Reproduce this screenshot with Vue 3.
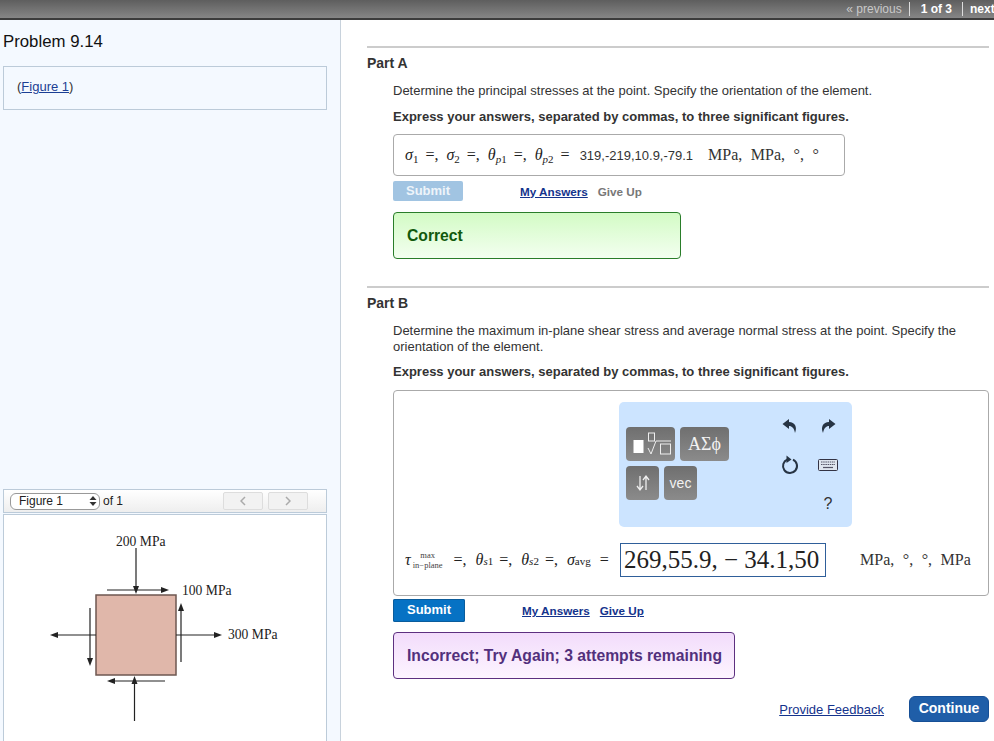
<script setup>
const partAMath = [
  { sym: 'σ', subIt: '', sub: '1' },
  { sym: 'σ', subIt: '', sub: '2' },
  { sym: 'θ', subIt: 'p', sub: '1' },
  { sym: 'θ', subIt: 'p', sub: '2' }
]
const partBMath = [
  { sym: 'θ', subIt: 's', sub: '1' },
  { sym: 'θ', subIt: 's', sub: '2' }
]
</script>

<template>
  <div class="page">
    <header class="topbar">
      <span class="nav-prev">« previous</span>
      <span class="nav-count">1 of 3</span>
      <span class="nav-next">next</span>
    </header>

    <div class="body-row">
      <aside class="sidebar">
        <h1 class="problem-title">Problem 9.14</h1>
        <div class="intro-box">(<a class="link-plain">Figure 1</a>)</div>

        <div class="figure-area">
          <div class="figure-bar">
            <div class="figure-select">
              <span>Figure 1</span>
              <svg width="8" height="12" viewBox="0 0 8 12">
                <path d="M4 1 L7.5 5 H0.5 Z M4 11 L7.5 7 H0.5 Z" fill="#333" />
              </svg>
            </div>
            <span class="figure-of">of 1</span>
            <div class="pager">
              <span class="pager-btn">
                <svg width="6" height="10" viewBox="0 0 6 10"><path d="M5 1 L1 5 L5 9" fill="none" stroke="#aaa" stroke-width="1.5" /></svg>
              </span>
              <span class="pager-btn">
                <svg width="6" height="10" viewBox="0 0 6 10"><path d="M1 1 L5 5 L1 9" fill="none" stroke="#aaa" stroke-width="1.5" /></svg>
              </span>
            </div>
          </div>
          <div class="figure-canvas">
            <svg class="diagram" width="322" height="226" viewBox="4 515 322 226">
              <rect x="96" y="595" width="80" height="80" fill="#e0b7aa" stroke="#6e5750" stroke-width="1.5" />
              <g stroke="#222" stroke-width="1.2" fill="none">
                <path d="M136 548 V590" />
                <path d="M107 590 H165" />
                <path d="M176 635 H218" />
                <path d="M96 635 H56" />
                <path d="M90 608 V660" />
                <path d="M181 606 V662" />
                <path d="M112 681 H165" />
                <path d="M134.500 684 V721" />
              </g>
              <g fill="#222">
                <path d="M136 594 L133 586 H139 Z" />
                <path d="M169 590 L161 587 V593 Z" />
                <path d="M222 635 L214 632 V638 Z" />
                <path d="M50 635 L58 632 V638 Z" />
                <path d="M90 666 L87 658 H93 Z" />
                <path d="M181 603 L178 611 H184 Z" />
                <path d="M107 681 L115 678 V684 Z" />
                <path d="M134.500 676 L131.500 684 H137.500 Z" />
              </g>
              <g class="diagram-label">
                <text x="116" y="546">200 MPa</text>
                <text x="182" y="595">100 MPa</text>
                <text x="228" y="639">300 MPa</text>
              </g>
            </svg>
          </div>
        </div>
      </aside>

      <main class="content">
        <section class="part part-a">
          <h2 class="part-title">Part A</h2>
          <div class="part-body">
            <p class="question">Determine the principal stresses at the point. Specify the orientation of the element.</p>
            <p class="instruction">Express your answers, separated by commas, to three significant figures.</p>
            <div class="answer-box answer-a">
              <span class="math">
                <template v-for="(m, i) in partAMath" :key="i">
                  <i>{{ m.sym }}</i><sub><i>{{ m.subIt }}</i>{{ m.sub }}</sub><span class="eq">=</span><span v-if="i < 3" class="comma">,</span>
                </template>
              </span>
              <span class="answer-value">319,-219,10.9,-79.1</span>
              <span class="units">MPa, MPa, °, °</span>
            </div>
            <div class="actions">
              <button class="submit submit-off">Submit</button>
              <a class="act-link act-a">My Answers</a>
              <span class="give-up-off">Give Up</span>
            </div>
            <div class="feedback correct">Correct</div>
          </div>
        </section>

        <section class="part part-b">
          <h2 class="part-title">Part B</h2>
          <div class="part-body">
            <p class="question">Determine the maximum in-plane shear stress and average normal stress at the point. Specify the orientation of the element.</p>
            <p class="instruction instruction-b">Express your answers, separated by commas, to three significant figures.</p>
            <div class="answer-box answer-b">
              <div class="palette">
                <div class="palette-tools">
                  <div class="tool-row">
                    <span class="tool tool-wide">
                      <svg width="42" height="26" viewBox="0 0 42 26">
                        <rect x="3.500" y="9" width="10" height="13" fill="#fff" />
                        <rect x="18.500" y="2" width="6" height="8" fill="none" stroke="#eee" />
                        <path d="M18 17 L21 23 L26 10 H41" fill="none" stroke="#eee" stroke-width="1" />
                        <rect x="30.500" y="13" width="10" height="10" fill="none" stroke="#eee" />
                      </svg>
                    </span>
                    <span class="tool tool-wide tool-greek">ΑΣϕ</span>
                  </div>
                  <div class="tool-row">
                    <span class="tool tool-narrow">
                      <svg width="18" height="18" viewBox="0 0 18 18">
                        <path d="M6 2 V15 M3 12 L6 16 L9 12 M12 16 V3 M9 6 L12 2 L15 6" fill="none" stroke="#eee" stroke-width="1.300" />
                      </svg>
                    </span>
                    <span class="tool tool-narrow tool-vec">vec</span>
                  </div>
                </div>
                <div class="palette-side">
                  <svg class="side-icon" width="16" height="16" viewBox="0 0 16 16">
                    <path d="M7 1 L0.500 6 L7 11 V8 C10 8 12 10 13 15 C15.500 9 13 4 7 4 Z" fill="#273444" />
                  </svg>
                  <svg class="side-icon" width="16" height="16" viewBox="0 0 16 16">
                    <path d="M9 1 L15.500 6 L9 11 V8 C6 8 4 10 3 15 C0.500 9 3 4 9 4 Z" fill="#273444" />
                  </svg>
                  <svg class="side-icon" width="20" height="20" viewBox="0 0 20 20">
                    <path d="M7.500 4.500 A7 7 0 1 0 13 4.700" fill="none" stroke="#273444" stroke-width="2" />
                    <path d="M6.500 0.500 L11.500 4.500 L6.500 8 Z" fill="#273444" />
                  </svg>
                  <svg class="side-icon" width="20" height="12" viewBox="0 0 20 12">
                    <rect x="0.500" y="0.500" width="19" height="11" rx="1" fill="#dfe6ee" stroke="#334" />
                    <path d="M3 3 H17 M3 5.500 H17" stroke="#556" stroke-width="1.200" stroke-dasharray="1.500 0.700" />
                    <path d="M5 8.500 H15" stroke="#556" stroke-width="1.200" />
                  </svg>
                  <span class="side-blank"></span>
                  <span class="side-help">?</span>
                </div>
              </div>
              <div class="answer-line">
                <span class="math math-b">
                  <span class="tau"><i>τ</i><span class="tau-sub"><span>max</span><span>in−plane</span></span></span>
                  <span class="eq">=</span><span class="comma">,</span>
                  <template v-for="(m, i) in partBMath" :key="i">
                    <i>{{ m.sym }}</i><sub><i>{{ m.subIt }}</i>{{ m.sub }}</sub>
                    <span class="eq">=</span><span class="comma">,</span>
                  </template>
                  <i>σ</i><sub>avg</sub>
                  <span class="eq eq-last">=</span>
                </span>
                <span class="value-input">269,55.9, − 34.1,50</span>
                <span class="units units-b">MPa, °, °, MPa</span>
              </div>
            </div>
            <div class="actions actions-b">
              <button class="submit">Submit</button>
              <a class="act-link act-b">My Answers</a>
              <a class="act-link">Give Up</a>
            </div>
            <div class="feedback incorrect">Incorrect; Try Again; 3 attempts remaining</div>
          </div>
        </section>

        <div class="footer-row">
          <a class="feedback-link">Provide Feedback</a>
          <button class="continue">Continue</button>
        </div>
      </main>
    </div>
  </div>
</template>

<style scoped>
.page {
  width: 994px;
  height: 741px;
  overflow: hidden;
  background: #fff;
  color: #222;
  font-family: "Liberation Sans", Arial, sans-serif;
  font-size: 12px;
}

.topbar {
  height: 18px;
  border-bottom: 2px solid #3c3c3c;
  background: linear-gradient(#5e5e5e, #868686);
  display: flex;
  justify-content: flex-end;
  align-items: center;
  font-size: 12px;
  color: #fff;
}

.nav-prev {
  color: #c9c9c9;
  padding-right: 7px;
  border-right: 1px solid #ddd;
  line-height: 14px;
}

.nav-count {
  font-weight: bold;
  padding: 0 10px 0 11px;
  border-right: 1px solid #ddd;
  line-height: 14px;
}

.nav-next {
  font-weight: bold;
  padding-left: 7px;
  width: 24px;
  overflow: hidden;
  white-space: nowrap;
  line-height: 14px;
}

.body-row {
  display: flex;
  height: 721px;
}

.sidebar {
  width: 341px;
  flex-shrink: 0;
  box-sizing: border-box;
  background: #f4f9ff;
  border-right: 1px solid #c8d2dc;
  padding: 12px 13px 0 3px;
  display: flex;
  flex-direction: column;
}

.problem-title {
  margin: 0;
  font-size: 16.800px;
  font-weight: normal;
  line-height: 20px;
  color: #111;
}

.intro-box {
  margin-top: 14px;
  height: 44px;
  box-sizing: border-box;
  border: 1px solid #bccbd9;
  padding: 12px 13px;
  font-size: 13px;
  line-height: 16px;
  color: #333;
}

.link-plain {
  color: #1c3f94;
  text-decoration: underline;
}

.figure-area {
  margin-top: 379px;
  display: flex;
  flex-direction: column;
  gap: 1px;
  flex: 1;
  min-height: 0;
}

.figure-bar {
  height: 22px;
  border: 1px solid #bccbd9;
  background: linear-gradient(#fff, #eeeeee);
  display: flex;
  align-items: center;
  padding-left: 6px;
  color: #222;
}

.figure-select {
  width: 90px;
  height: 17px;
  box-sizing: border-box;
  border: 1px solid #999;
  border-radius: 6px;
  background: #fff;
  padding: 0 2px 0 8px;
  display: flex;
  align-items: center;
  justify-content: space-between;
  line-height: 14px;
}

.figure-of {
  margin-left: 3px;
}

.pager {
  margin-left: 100px;
  display: flex;
  gap: 5px;
}

.pager-btn {
  width: 40px;
  height: 18px;
  box-sizing: border-box;
  border: 1px solid #ddd;
  border-radius: 2px;
  background: #f2f2f2;
  display: flex;
  align-items: center;
  justify-content: center;
}

.figure-canvas {
  flex: 1;
  min-height: 0;
  border: 1px solid #bccbd9;
  border-bottom: none;
  background: #fff;
  overflow: hidden;
}

.diagram {
  display: block;
}

.diagram-label {
  font-family: "Liberation Serif", "Times New Roman", serif;
  font-size: 13.600px;
  fill: #222;
}

.content {
  flex: 1;
  min-width: 0;
  padding: 26px 5px 0 26px;
}

.part {
  border-top: 2px solid #ccc;
}

.part-a {
  height: 238px;
}

.part-b {
  height: 408px;
}

.part-title {
  margin: 6px 0 0;
  font-size: 14px;
  line-height: 18px;
  font-weight: bold;
  color: #333;
}

.part-body {
  padding-left: 26px;
}

.question {
  margin: 11px 0 0;
  font-size: 13px;
  line-height: 16px;
  color: #333;
}

.instruction {
  margin: 10px 0 0;
  font-size: 13px;
  line-height: 16px;
  font-weight: bold;
  color: #333;
}

.instruction-b {
  margin-top: 9px;
}

.answer-box {
  box-sizing: border-box;
  border: 1px solid #aaa;
  border-radius: 4px;
  background: #fff;
}

.answer-a {
  margin-top: 9px;
  width: 452px;
  height: 42px;
  display: flex;
  align-items: center;
  padding-left: 11px;
}

.math {
  font-family: "Liberation Serif", "Times New Roman", serif;
  font-size: 16px;
  color: #222;
  white-space: nowrap;
}

.math sub {
  font-size: 11px;
  line-height: 0;
  vertical-align: -3px;
}

.eq {
  margin-left: 7px;
}

.comma {
  margin-right: 8px;
}

.answer-value {
  margin-left: 10px;
  font-size: 13px;
  color: #333;
}

.units {
  font-family: "Liberation Serif", "Times New Roman", serif;
  font-size: 16px;
  word-spacing: 4.500px;
  color: #333;
  white-space: nowrap;
}

.answer-a .units {
  margin-left: 15px;
}

.actions {
  margin-top: 5px;
  height: 20px;
  display: flex;
  align-items: center;
  font-weight: bold;
}

.submit {
  width: 70px;
  height: 20px;
  padding: 0 0 2px;
  border: none;
  border-radius: 2px;
  background: #0672c4;
  box-shadow: inset 0 0 0 1px #0a5c9c;
  color: #fff;
  font-family: "Liberation Sans", Arial, sans-serif;
  font-size: 13px;
  font-weight: bold;
}

.submit-off {
  background: #a1c4e2;
  box-shadow: none;
  color: #eef4fa;
}

.act-link {
  color: #14338c;
  text-decoration: underline;
  font-size: 11.700px;
}

.act-a {
  margin-left: 57px;
}

.act-b {
  margin-left: 57px;
  margin-right: 10px;
}

.give-up-off {
  margin-left: 10px;
  color: #777;
  font-size: 11.700px;
}

.feedback {
  box-sizing: border-box;
  height: 47px;
  margin-top: 11px;
  border-radius: 4px;
  display: flex;
  align-items: center;
  padding-left: 13px;
  font-size: 15.700px;
  font-weight: bold;
}

.correct {
  width: 288px;
  border: 1px solid #2a7d2a;
  background: linear-gradient(#d3fbc5, #f3fff0);
  color: #115a0c;
}

.incorrect {
  width: 342px;
  margin-top: 10px;
  border: 1px solid #5d3080;
  background: linear-gradient(#f2dcfb, #fdf4ff);
  color: #52307c;
}

.answer-b {
  margin-top: 10px;
  width: 596px;
  height: 206px;
  padding-top: 11px;
}

.palette {
  box-sizing: border-box;
  width: 233px;
  height: 125px;
  margin-left: 225px;
  border-radius: 5px;
  background: #cce4ff;
  display: flex;
  padding: 25px 0 0 7px;
}

.palette-tools {
  display: flex;
  flex-direction: column;
  gap: 5px;
  width: 103px;
}

.tool-row {
  display: flex;
  gap: 5px;
}

.tool {
  height: 34px;
  border-radius: 4px;
  background: linear-gradient(#6f6f6f, #8b8b8b);
  color: #f2f2f2;
  display: flex;
  align-items: center;
  justify-content: center;
}

.tool-wide {
  width: 49px;
}

.tool-narrow {
  width: 33px;
}

.tool-greek {
  font-family: "Liberation Serif", "Times New Roman", serif;
  font-size: 18px;
}

.tool-vec {
  font-size: 14px;
}

.palette-side {
  margin: -21px 0 0 42px;
  width: 80px;
  display: grid;
  grid-template-columns: 38px 38px;
  grid-auto-rows: 39px;
  align-items: center;
  justify-items: center;
}

.side-help {
  font-size: 16px;
  color: #333;
}

.answer-line {
  display: flex;
  align-items: center;
  margin-top: 16px;
  height: 34px;
  padding-left: 11px;
}

.math-b {
  width: 215px;
  flex-shrink: 0;
  margin-top: 8px;
  display: flex;
  align-items: baseline;
}

.math-b .eq {
  margin-left: 6px;
}

.math-b .eq-last {
  margin-left: 9px;
}

.math-b .comma {
  margin-right: 9px;
}

.tau {
  display: inline-flex;
  align-items: baseline;
  margin-right: 5px;
}

.tau-sub {
  display: inline-flex;
  flex-direction: column;
  align-items: center;
  font-size: 8.500px;
  line-height: 10px;
  margin-left: 2px;
  transform: translateY(-7px);
  color: #444;
}

.value-input {
  box-sizing: border-box;
  width: 206px;
  height: 34px;
  flex-shrink: 0;
  border: 1px solid #2f5f9a;
  font-family: "Liberation Serif", "Times New Roman", serif;
  font-size: 25px;
  line-height: 32px;
  padding-left: 3px;
  color: #222;
  white-space: nowrap;
}

.units-b {
  margin-left: 34px;
}

.actions-b {
  margin-top: 3px;
  height: 23px;
}

.actions-b .submit {
  width: 72px;
  height: 23px;
}

.footer-row {
  display: flex;
  align-items: center;
  justify-content: flex-end;
  gap: 25px;
}

.feedback-link {
  color: #14338c;
  text-decoration: underline;
  font-size: 13px;
}

.continue {
  width: 80px;
  height: 26px;
  padding: 0 0 2px;
  border: 1px solid #164f96;
  border-radius: 6px;
  background: #1f5ea8;
  color: #fff;
  font-family: "Liberation Sans", Arial, sans-serif;
  font-size: 14px;
  font-weight: bold;
}
</style>
